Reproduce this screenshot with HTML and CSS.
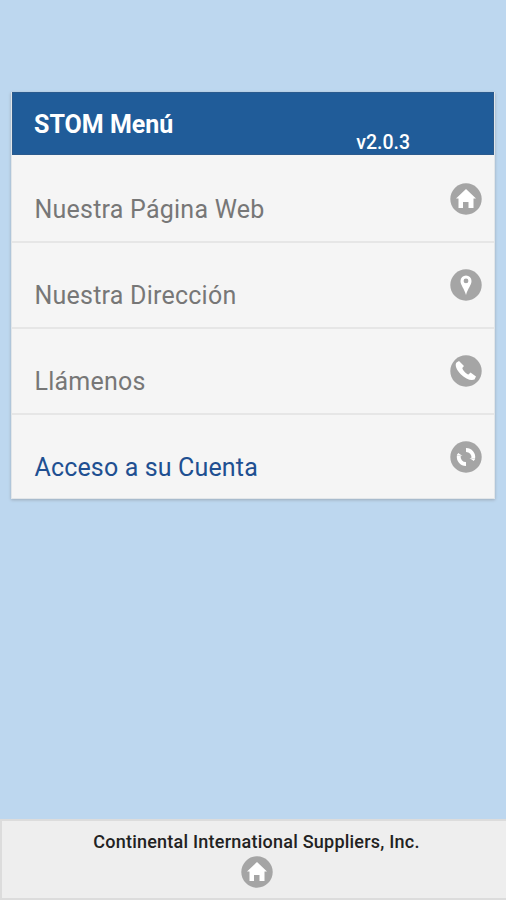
FILE: index.html
```html
<!DOCTYPE html>
<html lang="es">
<head>
<meta charset="utf-8">
<title>STOM Menú</title>
<link rel="stylesheet" href="styles.css">
</head>
<body>
<main class="menu">
  <header class="menu-header"><h1>STOM Menú</h1><span class="version">v2.0.3</span></header>
  <a class="row first"><span class="label">Nuestra Página Web</span>
    <svg class="icon" viewBox="0 0 32 32"><circle cx="16" cy="16" r="15.700"/><path class="mark" d="M16 6 6 15.500h2.500V25h4.500v-6h5.500v6h5v-9.500H26z"/></svg></a>
  <a class="row"><span class="label">Nuestra Dirección</span>
    <svg class="icon" viewBox="0 0 32 32"><circle cx="16" cy="16" r="15.700"/><path class="mark" fill-rule="evenodd" d="M16 6.500a5.500 5.500 0 0 0-5.500 5.500c0 4 3.500 7 5.500 14 2-7 5.500-10 5.500-14a5.500 5.500 0 0 0-5.500-5.500zm0 3a2.400 2.400 0 1 1 0 4.800 2.400 2.400 0 0 1 0-4.800z"/></svg></a>
  <a class="row"><span class="label">Llámenos</span>
    <svg class="icon" viewBox="0 0 32 32"><circle cx="16" cy="16" r="15.700"/><path class="mark" d="M9 6 6.500 7.500C4.500 10 6.500 15 11 19.500S21 26 24.500 24.500l1.500-3L20.500 17.500 18.500 19.500C16 19 12.500 15 12.300 13L14 11z"/></svg></a>
  <a class="row account"><span class="label">Acceso a su Cuenta</span>
    <svg class="icon" viewBox="0 0 32 32"><circle cx="16" cy="16" r="15.700"/><path class="arc" d="M8.800 14.500a7.200 7.200 0 0 0 7.200 8.500M23.200 17.500a7.200 7.200 0 0 0-7.200-8.500"/><path class="mark" d="M6.800 14l1.500-2 4.200 3zM25.200 18l-1.500 2-4.200-3z"/></svg></a>
</main>
<footer class="footer"><p>Continental International Suppliers, Inc.</p>
  <svg class="icon" viewBox="0 0 32 32"><circle cx="16" cy="16" r="15.700"/><path class="mark" d="M16 6 6 15.500h2.500V25h4.500v-6h5.500v6h5v-9.500H26z"/></svg></footer>
</body>
</html>
```
FILE: styles.css
```css
* { box-sizing: border-box; }
body { margin: 0; height: 900px; display: flex; flex-direction: column; background: #bdd7ef; font-family: Roboto, "Liberation Sans", sans-serif; overflow: hidden; }
.menu { margin: 92px 11px 0; background: #f5f5f5; border: 1px solid #e2e6e9; border-top: 0; box-shadow: 0 1px 3px #9cabb9; }
.menu-header { height: 63px; background: #205c99; color: #fff; display: flex; padding: 0 83px 0 21px; justify-content: space-between; border: 1px solid #2b5b8e; }
h1 { margin: 17px 0 0; font-size: 25px; line-height: 29px; font-weight: 700; }
.version { margin-top: 38px; font-size: 19.500px; line-height: 23px; font-weight: 500; }
.row { display: flex; justify-content: space-between; height: 86px; padding: 26px 12px 0 22.500px; border-bottom: 2px solid #e6e6e6; color: #777; }
.row.first { height: 88px; padding-top: 28px; }
.row.account { height: 83px; color: #204f91; border-bottom: 0; }
.label { font-size: 25px; line-height: 30px; margin-top: 12px; letter-spacing: .23px; }
.account .label { letter-spacing: .15px; }
.icon { width: 32px; height: 32px; display: block; fill: #a5a5a5; }
.mark { fill: #fff; }
.arc { fill: none; stroke: #fff; stroke-width: 3.800; }
.footer { margin-top: auto; height: 81px; padding-left: 5px; border: 2px solid #dcdcdc; border-right: 0; background: #eee; display: flex; flex-direction: column; align-items: center; }
.footer p { margin: 10px 0 4px; font-size: 18px; line-height: 21px; font-weight: 500; color: #222; letter-spacing: .23px; }
```
